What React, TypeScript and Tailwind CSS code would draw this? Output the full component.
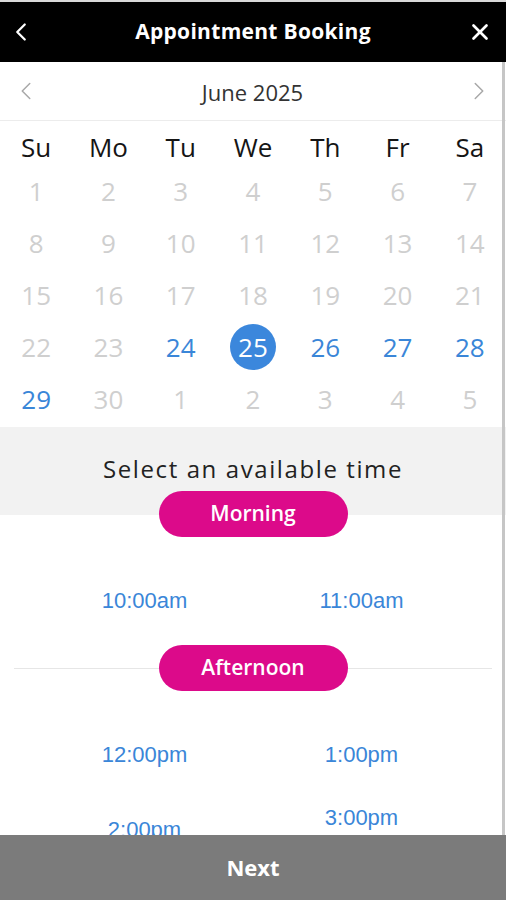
import { ChevronLeft, ChevronRight, X } from "lucide-react";

type Day = { n: number; state: "off" | "open" | "selected" };

const rows: Day[][] = [
  [1, 2, 3, 4, 5, 6, 7].map((n) => ({ n, state: "off" as const })),
  [8, 9, 10, 11, 12, 13, 14].map((n) => ({ n, state: "off" as const })),
  [15, 16, 17, 18, 19, 20, 21].map((n) => ({ n, state: "off" as const })),
  [
    { n: 22, state: "off" },
    { n: 23, state: "off" },
    { n: 24, state: "open" },
    { n: 25, state: "selected" },
    { n: 26, state: "open" },
    { n: 27, state: "open" },
    { n: 28, state: "open" },
  ],
  [
    { n: 29, state: "open" },
    { n: 30, state: "off" },
    { n: 1, state: "off" },
    { n: 2, state: "off" },
    { n: 3, state: "off" },
    { n: 4, state: "off" },
    { n: 5, state: "off" },
  ],
];

const weekdays = ["Su", "Mo", "Tu", "We", "Th", "Fr", "Sa"];

const sans = "font-['Open_Sans','Noto_Sans',sans-serif]";

const SlotPill = ({ label }: { label: string }) => (
  <div className="w-[189px] h-[46px] rounded-full bg-[#dc0a8a] flex items-center justify-center text-white text-[21px] font-semibold">
    {label}
  </div>
);

const TimeSlot = ({ time, note }: { time: string; note?: string }) => (
  <div className="flex flex-col items-center justify-center font-['Liberation_Sans',Arial,sans-serif] text-[#3a86d8]">
    <span className="text-[22px] leading-6">{time}</span>
    {note && <span className="text-[13px] leading-6 text-[#9bbfe6]">{note}</span>}
  </div>
);

export default function App() {
  return (
    <div className={`h-[900px] w-[506px] overflow-hidden flex flex-col bg-white ${sans}`}>
      <div className="h-[2px] bg-[#d9d9d9] shrink-0" />
      <header className="h-[60px] shrink-0 bg-black flex items-center justify-between pl-[6px] pr-[13px]">
        <ChevronLeft className="w-[30px] h-[30px] text-white" strokeWidth={1.8} />
        <h1 className="text-white text-[21px] font-bold tracking-[0.3px] ml-[3px]">Appointment Booking</h1>
        <X className="w-[26px] h-[26px] text-white" strokeWidth={2.5} />
      </header>

      <div className="relative flex-1 min-h-0 overflow-hidden">
        <div className="h-[59px] flex items-center justify-between px-[11px] border-b border-[#ececec]">
          <ChevronLeft className="w-[30px] h-[30px] text-[#a8a8a8]" strokeWidth={1.2} />
          <span className="text-[22px] text-[#333] mt-[3px]">June 2025</span>
          <ChevronRight className="w-[30px] h-[30px] text-[#a8a8a8] mr-[1px]" strokeWidth={1.2} />
        </div>

        <div className="grid grid-cols-7 pt-[8px]">
          {weekdays.map((w) => (
            <div key={w} className="h-[36px] flex items-center justify-center text-[26px] text-[#151515]">
              {w}
            </div>
          ))}
        </div>
        <div>
          {rows.map((row, i) => (
            <div key={i} className="grid grid-cols-7 h-[52px]">
              {row.map((d, j) => (
                <div key={j} className="flex items-center justify-center">
                  {d.state === "selected" ? (
                    <span className="w-[46px] h-[46px] rounded-full bg-[#3b87dc] text-white text-[26px] flex items-center justify-center">
                      {d.n}
                    </span>
                  ) : (
                    <span
                      className={
                        d.state === "open"
                          ? "text-[26px] text-[#3a86d8]"
                          : "text-[26px] text-[#cfcfcf]"
                      }
                    >
                      {d.n}
                    </span>
                  )}
                </div>
              ))}
            </div>
          ))}
        </div>

        <div className="bg-[#f2f2f2] h-[88px] mt-[2px] flex items-start justify-center pt-[30px]">
          <span className="text-[24px] text-[#222] tracking-[1.6px] leading-none">Select an available time</span>
        </div>
        <div className="flex justify-center -mt-[24px]">
          <SlotPill label="Morning" />
        </div>

        <div className="grid grid-cols-2 px-[36px] mt-[39px]">
          <div className="h-[50px] flex items-center justify-center">
            <TimeSlot time="10:00am" />
          </div>
          <div className="h-[50px] flex items-center justify-center">
            <TimeSlot time="11:00am" />
          </div>
        </div>

        <div className="relative mx-[14px] mt-[19px] h-[46px] flex items-center justify-center">
          <div className="absolute left-0 right-0 top-1/2 h-px bg-[#e6e6e6]" />
          <div className="relative">
            <SlotPill label="Afternoon" />
          </div>
        </div>

        <div className="grid grid-cols-2 px-[36px] mt-[39px]">
          <div className="h-[50px] flex items-center justify-center">
            <TimeSlot time="12:00pm" />
          </div>
          <div className="h-[50px] flex items-center justify-center">
            <TimeSlot time="1:00pm" />
          </div>
          <div className="h-[50px] mt-[25px] flex items-center justify-center">
            <TimeSlot time="2:00pm" />
          </div>
          <div className="h-[50px] mt-[25px] flex items-center justify-center">
            <TimeSlot time="3:00pm" note="1 spot left" />
          </div>
        </div>

        <div className="absolute top-0 bottom-0 right-[1px] w-[3px] bg-[#c6c6c6]" />
      </div>

      <button className="h-[65px] shrink-0 bg-[#7b7b7b] text-white text-[22px] font-bold flex items-center justify-center">
        Next
      </button>
    </div>
  );
}
